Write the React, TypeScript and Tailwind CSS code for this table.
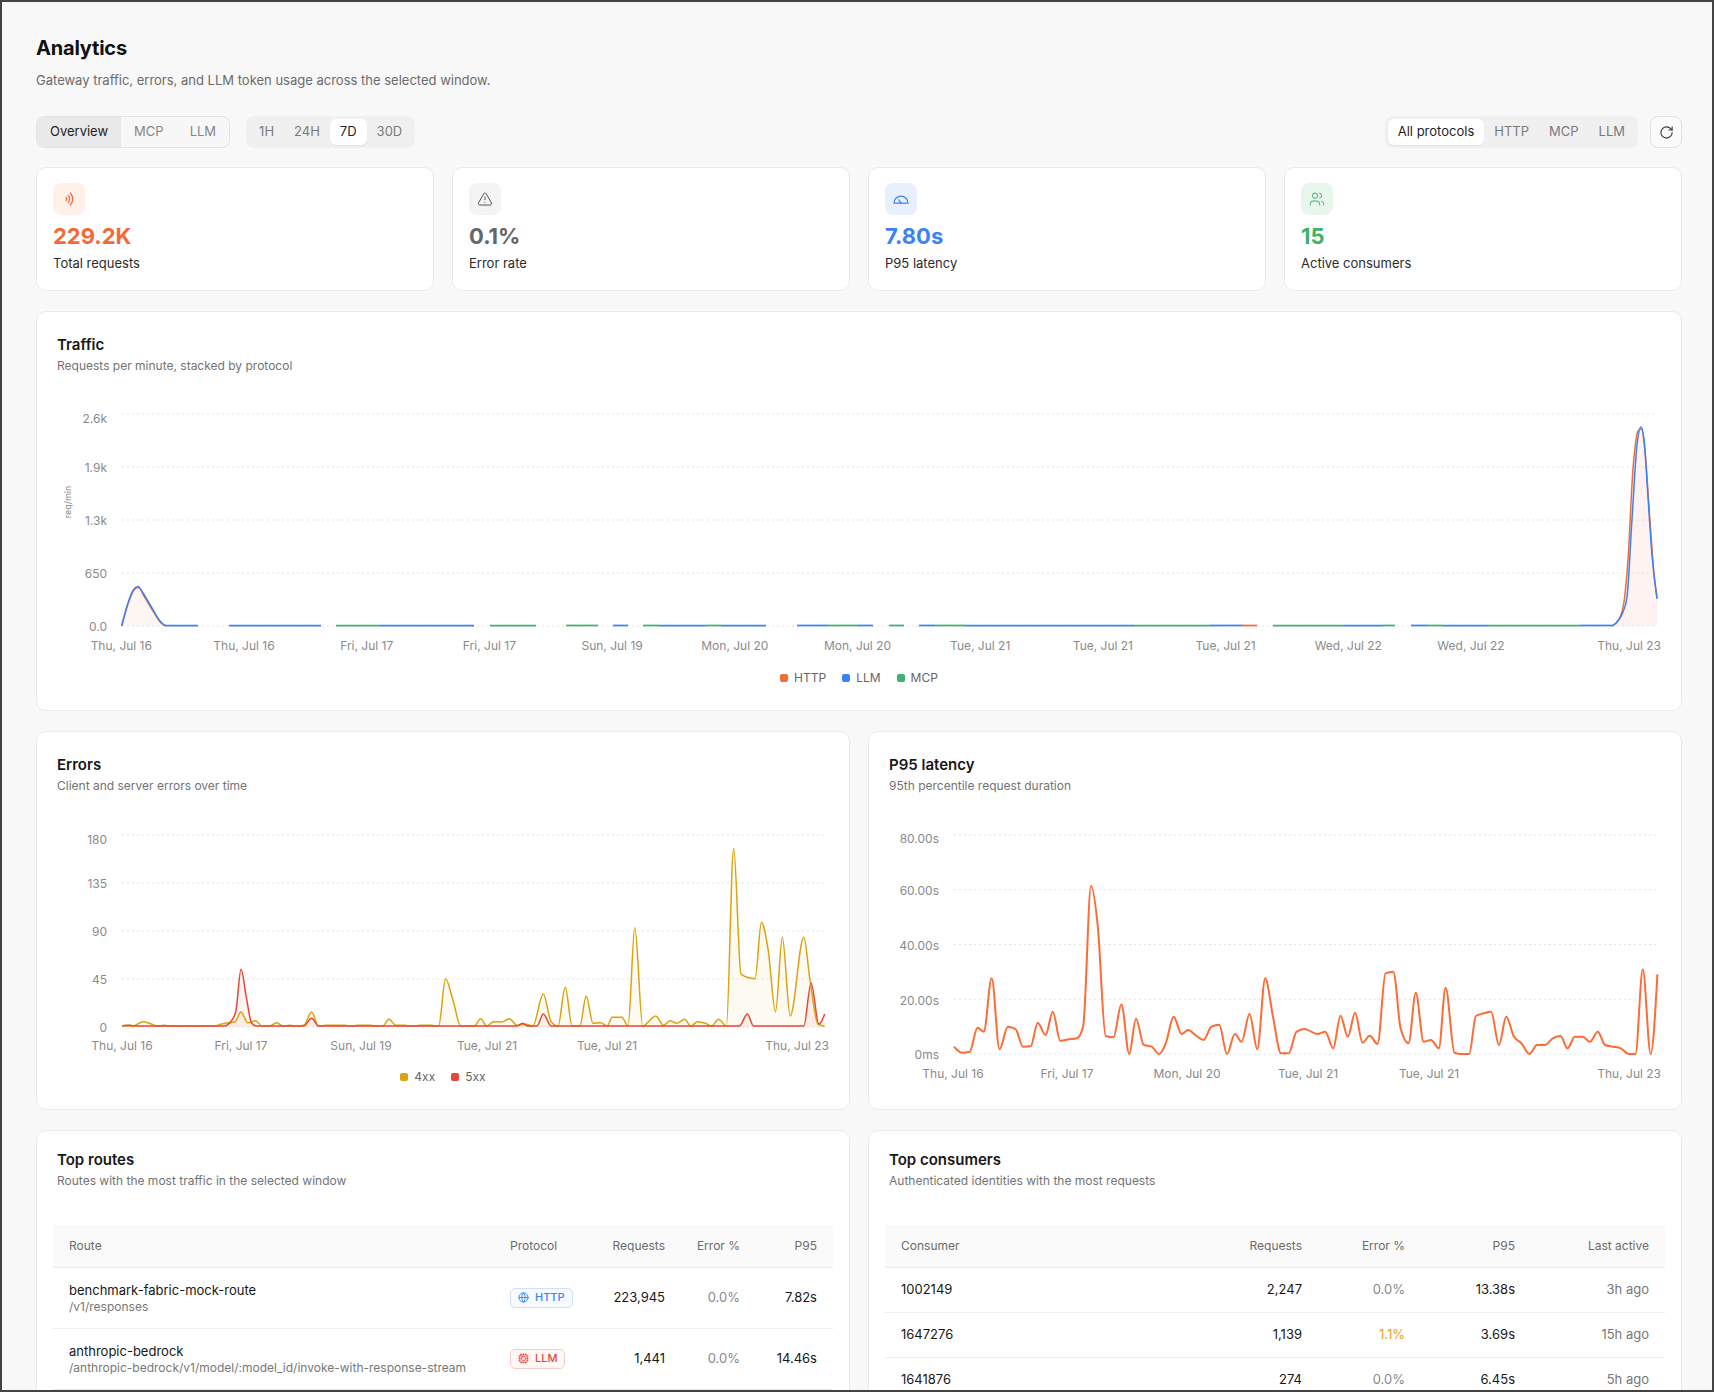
import React from "react";
import { TriangleAlert, Users, RotateCw, Globe, Cpu } from "lucide-react";

type Pt = [number, number];

function sgn(x: number) {
  return x < 0 ? -1 : 1;
}

function monotone(pts: Pt[]): string {
  const n = pts.length;
  if (n < 2) return "";
  if (n === 2) return `M${pts[0][0]},${pts[0][1]}L${pts[1][0]},${pts[1][1]}`;
  const h = (i: number) => pts[i + 1][0] - pts[i][0];
  const s = (i: number) => (pts[i + 1][1] - pts[i][1]) / (h(i) || 1e-9);
  const t: number[] = new Array(n).fill(0);
  for (let i = 1; i < n - 1; i++) {
    const h0 = h(i - 1);
    const h1 = h(i);
    const s0 = s(i - 1);
    const s1 = s(i);
    const p = (s0 * h1 + s1 * h0) / (h0 + h1);
    t[i] = (sgn(s0) + sgn(s1)) * Math.min(Math.abs(s0), Math.abs(s1), 0.5 * Math.abs(p)) || 0;
  }
  t[0] = (3 * s(0) - t[1]) / 2;
  t[n - 1] = (3 * s(n - 2) - t[n - 2]) / 2;
  let d = `M${pts[0][0].toFixed(1)},${pts[0][1].toFixed(1)}`;
  for (let i = 0; i < n - 1; i++) {
    const [x0, y0] = pts[i];
    const [x1, y1] = pts[i + 1];
    const dx = (x1 - x0) / 3;
    d += `C${(x0 + dx).toFixed(1)},${(y0 + t[i] * dx).toFixed(1)},${(x1 - dx).toFixed(1)},${(
      y1 -
      t[i + 1] * dx
    ).toFixed(1)},${x1.toFixed(1)},${y1.toFixed(1)}`;
  }
  return d;
}

function area(pts: Pt[], base: number) {
  const first = pts[0];
  const last = pts[pts.length - 1];
  return `${monotone(pts)}L${last[0]},${base}L${first[0]},${base}Z`;
}

function conv(list: number[][], ax: number, bx: number, by: number, base: number): Pt[] {
  return list.map(([x, y]) => [x * ax + bx, Math.min(y / 3 + by, base)] as Pt);
}

/* ---------------- Traffic ---------------- */
const TX = 57;
const TY = 373;
const tr = (list: number[][]): Pt[] => list.map(([x, y]) => [x - TX, Math.min(y - TY, 254)] as Pt);

const bumpBlue = tr([
  [121.7, 627],
  [128, 604],
  [134, 590],
  [138, 587.5],
  [143, 594],
  [152, 609],
  [160, 622],
  [165.5, 627],
]);
const bumpOrange = tr([
  [121.7, 627],
  [128, 605],
  [134, 591],
  [138.5, 588.5],
  [144, 597],
  [153, 612],
  [161, 624],
  [166.5, 627],
]);
const spikeBlue = tr([
  [1612, 627],
  [1618, 622],
  [1623, 613],
  [1627, 598],
  [1632, 520],
  [1637, 446],
  [1641, 428],
  [1644, 440],
  [1648, 498],
  [1652, 556],
  [1657, 600],
]);
const spikeOrange = tr([
  [1612, 627],
  [1619, 620],
  [1624, 603],
  [1628, 560],
  [1633, 470],
  [1638, 432],
  [1641.5, 430],
  [1645, 452],
  [1649.5, 515],
  [1654, 575],
  [1657, 598],
]);

const blueSegs = [
  [165, 198],
  [229, 321],
  [380, 474],
  [613, 628],
  [659, 706],
  [721, 766],
  [797, 828],
  [858, 873],
  [919, 935],
  [965, 1134],
  [1210, 1242],
  [1344, 1383],
  [1411, 1427],
  [1443, 1488],
  [1580, 1612],
];
const greenSegs = [
  [336, 380],
  [490, 536],
  [566, 598],
  [643, 659],
  [706, 721],
  [828, 858],
  [889, 904],
  [935, 965],
  [1134, 1210],
  [1273, 1344],
  [1383, 1395],
  [1427, 1443],
  [1488, 1580],
];
const orangeSegs = [[1242, 1257]];

const trafficXLabels = [
  "Thu, Jul 16",
  "Thu, Jul 16",
  "Fri, Jul 17",
  "Fri, Jul 17",
  "Sun, Jul 19",
  "Mon, Jul 20",
  "Mon, Jul 20",
  "Tue, Jul 21",
  "Tue, Jul 21",
  "Tue, Jul 21",
  "Wed, Jul 22",
  "Wed, Jul 22",
];

const BLUE = "#3b82f6";
const GREEN = "#3cb371";
const ORANGE = "#f26b3a";
const AMBER = "#dca20f";
const RED = "#e5483a";
const AXIS = "#8a8a8a";
const GRID = "#e4e4e4";

function TrafficChart() {
  const grids = [42, 95, 148, 201, 254];
  const ylabels: [string, number][] = [
    ["2.6k", 46],
    ["1.9k", 95],
    ["1.3k", 148],
    ["650", 201],
    ["0.0", 254],
  ];
  return (
    <svg width={1604} height={290} className="-mt-0.5 block">
      {grids.map((g) => (
        <line key={g} x1={65} x2={1600} y1={g} y2={g} stroke={GRID} strokeDasharray="2 3" />
      ))}
      {ylabels.map(([l, y]) => (
        <text key={l} x={50} y={y} textAnchor="end" dominantBaseline="central" fontSize={12} fill={AXIS}>
          {l}
        </text>
      ))}
      <text
        x={10}
        y={130}
        transform="rotate(-90 10 130)"
        textAnchor="middle"
        dominantBaseline="central"
        fontSize={9}
        fill={AXIS}
      >
        req/min
      </text>
      <path d={area(bumpOrange, 254)} fill={ORANGE} fillOpacity={0.06} />
      <path d={area(spikeOrange, 254)} fill={ORANGE} fillOpacity={0.08} />
      {greenSegs.map(([a, b]) => (
        <line key={"g" + a} x1={a - TX} x2={b - TX} y1={253.5} y2={253.5} stroke={GREEN} strokeWidth={1.75} />
      ))}
      {blueSegs.map(([a, b]) => (
        <line key={"b" + a} x1={a - TX} x2={b - TX} y1={253.5} y2={253.5} stroke={BLUE} strokeWidth={1.75} />
      ))}
      {orangeSegs.map(([a, b]) => (
        <line key={"o" + a} x1={a - TX} x2={b - TX} y1={253.5} y2={253.5} stroke={ORANGE} strokeWidth={1.75} />
      ))}
      <path d={monotone(bumpOrange)} fill="none" stroke={ORANGE} strokeWidth={1.5} />
      <path d={monotone(bumpBlue)} fill="none" stroke={BLUE} strokeWidth={1.5} />
      <path d={monotone(spikeOrange)} fill="none" stroke={ORANGE} strokeWidth={1.5} />
      <path d={monotone(spikeBlue)} fill="none" stroke={BLUE} strokeWidth={1.5} />
      {trafficXLabels.map((l, i) => (
        <text
          key={i}
          x={64.3 + 122.7 * i}
          y={273}
          textAnchor="middle"
          dominantBaseline="central"
          fontSize={12}
          fill={AXIS}
        >
          {l}
        </text>
      ))}
      <text x={1604} y={273} textAnchor="end" dominantBaseline="central" fontSize={12} fill={AXIS}>
        Thu, Jul 23
      </text>
    </svg>
  );
}

/* ---------------- Errors ---------------- */
const e4xx = [
  [165, 888], [185, 888], [205, 875], [220, 882], [232, 888], [245, 886], [258, 888], [340, 888],
  [355, 882], [368, 878], [380, 876], [392, 846], [405, 878], [420, 872], [432, 888], [447, 888],
  [460, 878], [472, 888], [485, 886], [500, 888], [512, 886], [527, 846], [540, 888], [555, 886],
  [590, 886], [602, 888], [615, 886], [640, 886], [652, 888], [663, 888], [675, 868], [688, 886],
  [705, 886], [720, 888], [735, 886], [755, 886], [770, 888], [783, 746], [798, 815], [812, 888],
  [838, 888], [850, 866], [862, 888], [875, 875], [890, 876], [905, 866], [920, 886], [935, 882],
  [950, 888], [970, 792], [985, 875], [998, 888], [1012, 772], [1025, 888], [1040, 888], [1052, 798],
  [1065, 880], [1080, 878], [1092, 888], [1102, 862], [1120, 862], [1132, 888], [1145, 593], [1160, 888],
  [1185, 858], [1200, 886], [1212, 872], [1225, 880], [1240, 868], [1252, 888], [1265, 875], [1280, 880],
  [1292, 888], [1305, 868], [1320, 888], [1334, 355], [1348, 732], [1360, 742], [1375, 746], [1387, 577],
  [1400, 660], [1414, 845], [1427, 622], [1442, 858], [1468, 622], [1480, 750], [1495, 882], [1508, 888],
];
const e5xx = [
  [165, 888], [172, 886], [180, 886], [190, 888], [360, 888], [372, 875], [382, 845], [392, 718],
  [402, 800], [412, 878], [422, 888], [512, 888], [527, 865], [540, 888], [920, 888], [930, 880],
  [940, 888], [958, 888], [970, 852], [985, 888], [1345, 888], [1360, 852], [1372, 888], [1468, 888],
  [1482, 760], [1497, 882], [1508, 852],
];

function ErrorsChart() {
  const base = 235;
  const p4 = conv(e4xx, 0.523, -21, -62, base);
  const p5 = conv(e5xx, 0.523, -21, -62, base);
  const grids = [43, 91, 139, 187, 235];
  const ylabels: [string, number][] = [
    ["180", 47],
    ["135", 91],
    ["90", 139],
    ["45", 187],
    ["0", 235],
  ];
  const xl: [string, number, "middle" | "end"][] = [
    ["Thu, Jul 16", 65, "middle"],
    ["Fri, Jul 17", 184, "middle"],
    ["Sun, Jul 19", 304, "middle"],
    ["Tue, Jul 21", 430, "middle"],
    ["Tue, Jul 21", 550, "middle"],
    ["Thu, Jul 23", 772, "end"],
  ];
  return (
    <svg width={772} height={271} className="-mt-0.5 block">
      {grids.map((g) => (
        <line key={g} x1={65} x2={768} y1={g} y2={g} stroke={GRID} strokeDasharray="2 3" />
      ))}
      {ylabels.map(([l, y]) => (
        <text key={l} x={50} y={y} textAnchor="end" dominantBaseline="central" fontSize={12} fill={AXIS}>
          {l}
        </text>
      ))}
      <path d={area(p4, base)} fill={AMBER} fillOpacity={0.06} />
      <path d={area(p5, base)} fill={RED} fillOpacity={0.06} />
      <path d={monotone(p4)} fill="none" stroke={AMBER} strokeWidth={1.5} />
      <path d={monotone(p5)} fill="none" stroke={RED} strokeWidth={1.5} />
      {xl.map(([l, x, a], i) => (
        <text key={i} x={x} y={253} textAnchor={a} dominantBaseline="central" fontSize={12} fill={AXIS}>
          {l}
        </text>
      ))}
    </svg>
  );
}

/* ---------------- Latency ---------------- */
const lat = [
  [165, 950], [180, 968], [195, 965], [210, 893], [222, 905], [237, 745], [252, 958], [268, 890],
  [283, 898], [297, 950], [312, 948], [325, 878], [340, 915], [354, 845], [368, 932], [385, 928],
  [400, 925], [412, 888], [427, 468], [440, 590], [455, 918], [470, 922], [485, 823], [500, 975],
  [513, 866], [528, 945], [543, 950], [557, 975], [570, 940], [585, 860], [600, 912], [613, 900],
  [628, 917], [642, 930], [657, 890], [672, 884], [687, 973], [702, 912], [715, 935], [730, 852],
  [745, 958], [760, 745], [775, 860], [790, 970], [805, 970], [820, 905], [835, 897], [860, 912],
  [875, 905], [890, 955], [904, 857], [918, 920], [932, 848], [946, 938], [960, 917], [975, 942],
  [990, 730], [1005, 725], [1019, 895], [1034, 940], [1048, 788], [1063, 935], [1077, 930], [1092, 955],
  [1105, 773], [1122, 968], [1135, 975], [1150, 972], [1163, 858], [1178, 850], [1192, 845], [1207, 945],
  [1221, 860], [1235, 918], [1250, 940], [1265, 973], [1280, 945], [1295, 945], [1310, 925], [1325, 918],
  [1338, 955], [1352, 920], [1367, 920], [1381, 935], [1396, 905], [1410, 945], [1425, 950], [1440, 955],
  [1455, 975], [1468, 975], [1482, 718], [1497, 975], [1510, 733],
];

function LatencyChart() {
  const base = 262;
  const p = conv(lat, 0.523, -21.3, -62, base);
  const grids = [43, 97.75, 152.5, 207.25, 262];
  const ylabels: [string, number][] = [
    ["80.00s", 46],
    ["60.00s", 98],
    ["40.00s", 153],
    ["20.00s", 208],
    ["0ms", 262],
  ];
  const xl: [string, number, "middle" | "end"][] = [
    ["Thu, Jul 16", 64, "middle"],
    ["Fri, Jul 17", 178, "middle"],
    ["Mon, Jul 20", 298, "middle"],
    ["Tue, Jul 21", 419, "middle"],
    ["Tue, Jul 21", 540, "middle"],
    ["Thu, Jul 23", 772, "end"],
  ];
  return (
    <svg width={772} height={295} className="-mt-0.5 block">
      {grids.map((g) => (
        <line key={g} x1={65} x2={768} y1={g} y2={g} stroke={GRID} strokeDasharray="2 3" />
      ))}
      {ylabels.map(([l, y]) => (
        <text key={l} x={50} y={y} textAnchor="end" dominantBaseline="central" fontSize={12} fill={AXIS}>
          {l}
        </text>
      ))}
      <path d={monotone(p)} fill="none" stroke="#ff6a35" strokeWidth={2} strokeLinejoin="round" />
      {xl.map(([l, x, a], i) => (
        <text key={i} x={x} y={281} textAnchor={a} dominantBaseline="central" fontSize={12} fill={AXIS}>
          {l}
        </text>
      ))}
    </svg>
  );
}

/* ---------------- Icons ---------------- */
function WavesIcon() {
  return (
    <svg width={16} height={16} viewBox="0 0 24 24" fill="none" stroke={ORANGE} strokeWidth={2} strokeLinecap="round">
      <path d="M7.5 9.6a3.4 3.4 0 0 1 0 4.8" />
      <path d="M10.8 6.6a8 8 0 0 1 0 10.8" />
      <path d="M14.2 3.4a12.6 12.6 0 0 1 0 17.2" />
    </svg>
  );
}

function GaugeIcon() {
  return (
    <svg width={16} height={16} viewBox="0 0 16 16" fill="none" stroke="#3b82f6" strokeWidth={1.2} strokeLinecap="round" strokeLinejoin="round">
      <path d="M1 12.2A7 7 0 0 1 15 12.2Z" />
      <path d="M8 12.2 5.8 8.8" />
    </svg>
  );
}

/* ---------------- Pieces ---------------- */
function StatCard(props: {
  icon: React.ReactNode;
  iconBg: string;
  value: string;
  valueColor: string;
  label: string;
}) {
  return (
    <div className="rounded-[10px] border border-[#ebebeb] bg-white px-4 pt-[15px] pb-[17px]">
      <div className={`flex h-8 w-8 items-center justify-center rounded-lg ${props.iconBg}`}>{props.icon}</div>
      <div className={`mt-2 text-[22px] leading-[26px] font-bold ${props.valueColor}`}>{props.value}</div>
      <div className="mt-1 text-[13px] leading-5 text-[#2b2b2b]">{props.label}</div>
    </div>
  );
}

function CardHeader({ title, sub }: { title: string; sub: string }) {
  return (
    <div>
      <div className="text-[15px] leading-6 font-semibold text-[#171717]">{title}</div>
      <div className="mt-px text-[12px] leading-4 text-[#737373]">{sub}</div>
    </div>
  );
}

function LegendItem({ color, label }: { color: string; label: string }) {
  return (
    <div className="flex items-center gap-[6px]">
      <span className={`h-2 w-2 rounded-[2px] ${color}`} />
      <span>{label}</span>
    </div>
  );
}

const routes = [
  {
    name: "benchmark-fabric-mock-route",
    path: "/v1/responses",
    proto: "HTTP",
    req: "223,945",
    err: "0.0%",
    p95: "7.82s",
  },
  {
    name: "anthropic-bedrock",
    path: "/anthropic-bedrock/v1/model/:model_id/invoke-with-response-stream",
    proto: "LLM",
    req: "1,441",
    err: "0.0%",
    p95: "14.46s",
  },
];

const consumers = [
  { id: "1002149", req: "2,247", err: "0.0%", warn: false, p95: "13.38s", last: "3h ago" },
  { id: "1647276", req: "1,139", err: "1.1%", warn: true, p95: "3.69s", last: "15h ago" },
  { id: "1641876", req: "274", err: "0.0%", warn: false, p95: "6.45s", last: "5h ago" },
];

function ProtoBadge({ proto }: { proto: string }) {
  if (proto === "HTTP") {
    return (
      <span className="inline-flex h-5 items-center gap-[6px] rounded-[5px] border border-[#cfe0fb] bg-[#f7faff] px-[7px] text-[11px] font-medium text-[#3b82f6]">
        <Globe size={11} strokeWidth={2} />
        HTTP
      </span>
    );
  }
  return (
    <span className="inline-flex h-5 items-center gap-[6px] rounded-[5px] border border-[#f8cdc6] bg-[#fff8f7] px-[7px] text-[11px] font-medium text-[#e5483a]">
      <Cpu size={11} strokeWidth={2} />
      LLM
    </span>
  );
}

const routeCols = "grid-cols-[1fr_94px_93px_75px_77px]";
const consCols = "grid-cols-[1fr_120px_103px_110px_134px]";

export default function App() {
  return (
    <div className="h-[1392px] w-full overflow-hidden border-2 border-[#434343] bg-[#f8f8f8] pt-[32px] pr-[30px] pl-[34px] font-[Inter,sans-serif] text-[#171717]">
      {/* Header */}
      <h1 className="text-xl leading-7 font-bold tracking-[-0.01em] text-[#111]">Analytics</h1>
      <p className="mt-2 text-[13px] leading-5 text-[#6b6b6b]">
        Gateway traffic, errors, and LLM token usage across the selected window.
      </p>

      {/* Controls */}
      <div className="mt-[26px] flex h-8 items-center justify-between">
        <div className="flex items-center gap-4">
          <div className="flex h-8 items-stretch overflow-hidden rounded-lg border border-[#e3e3e3] bg-[#f7f7f7] text-[13px]">
            <div className="flex items-center bg-[#e9e9e9] px-[13px] text-[#1f1f1f]">Overview</div>
            <div className="flex items-center px-[13px] text-[#858585]">MCP</div>
            <div className="flex items-center px-[13px] text-[#858585]">LLM</div>
          </div>
          <div className="flex h-8 items-center rounded-lg bg-[#f0f0f0] p-[3px] text-[13px]">
            <div className="flex h-[26px] items-center px-2.5 text-[#7a7a7a]">1H</div>
            <div className="flex h-[26px] items-center px-2.5 text-[#7a7a7a]">24H</div>
            <div className="flex h-[26px] items-center rounded-md bg-white px-2.5 text-[#1f1f1f] shadow-[0_1px_2px_rgba(0,0,0,0.06)]">
              7D
            </div>
            <div className="flex h-[26px] items-center px-2.5 text-[#7a7a7a]">30D</div>
          </div>
        </div>
        <div className="flex items-center gap-3">
          <div className="flex h-8 items-center rounded-lg bg-[#f0f0f0] p-[3px] text-[13px]">
            <div className="flex h-[26px] items-center rounded-md bg-white px-2.5 text-[#1f1f1f] shadow-[0_1px_2px_rgba(0,0,0,0.06)]">
              All protocols
            </div>
            <div className="flex h-[26px] items-center px-2.5 text-[#7a7a7a]">HTTP</div>
            <div className="flex h-[26px] items-center px-2.5 text-[#7a7a7a]">MCP</div>
            <div className="flex h-[26px] items-center px-2.5 text-[#7a7a7a]">LLM</div>
          </div>
          <div className="flex h-8 w-8 items-center justify-center rounded-lg border border-[#e3e3e3] bg-[#fbfbfb] text-[#3a3a3a]">
            <RotateCw size={15} strokeWidth={1.75} />
          </div>
        </div>
      </div>

      {/* Stat cards */}
      <div className="mt-[19px] grid grid-cols-4 gap-[18px]">
        <StatCard
          icon={<WavesIcon />}
          iconBg="bg-[#fff0ea]"
          value="229.2K"
          valueColor="text-[#f4693a]"
          label="Total requests"
        />
        <StatCard
          icon={<TriangleAlert size={16} strokeWidth={1.5} className="text-[#555]" />}
          iconBg="bg-[#f4f4f4]"
          value="0.1%"
          valueColor="text-[#63666a]"
          label="Error rate"
        />
        <StatCard
          icon={<GaugeIcon />}
          iconBg="bg-[#e9f0fd]"
          value="7.80s"
          valueColor="text-[#3b82f6]"
          label="P95 latency"
        />
        <StatCard
          icon={<Users size={16} strokeWidth={1.5} className="text-[#3cb371]" />}
          iconBg="bg-[#e9f6ee]"
          value="15"
          valueColor="text-[#3cb36a]"
          label="Active consumers"
        />
      </div>

      {/* Traffic */}
      <div className="mt-[20px] rounded-[10px] border border-[#ebebeb] bg-white px-5 pt-[21px] pb-[24px]">
        <CardHeader title="Traffic" sub="Requests per minute, stacked by protocol" />
        <TrafficChart />
        <div className="mt-2 flex h-4 items-center justify-center gap-4 text-[12px] text-[#666]">
          <LegendItem color="bg-[#f26b3a]" label="HTTP" />
          <LegendItem color="bg-[#3b82f6]" label="LLM" />
          <LegendItem color="bg-[#3cb371]" label="MCP" />
        </div>
      </div>

      {/* Errors / latency */}
      <div className="mt-[20px] grid grid-cols-2 gap-[18px]">
        <div className="rounded-[10px] border border-[#ebebeb] bg-white px-5 pt-[21px] pb-[22px]">
          <CardHeader title="Errors" sub="Client and server errors over time" />
          <ErrorsChart />
          <div className="mt-1.5 flex h-4 items-center justify-center gap-4 text-[12px] text-[#666]">
            <LegendItem color="bg-[#dca20f]" label="4xx" />
            <LegendItem color="bg-[#e5483a]" label="5xx" />
          </div>
        </div>
        <div className="rounded-[10px] border border-[#ebebeb] bg-white px-5 pt-[21px] pb-[22px]">
          <CardHeader title="P95 latency" sub="95th percentile request duration" />
          <LatencyChart />
        </div>
      </div>

      {/* Tables */}
      <div className="mt-[20px] grid grid-cols-2 gap-[18px]">
        <div className="rounded-[10px] border border-[#ebebeb] bg-white px-5 pt-[17px] pb-4">
          <CardHeader title="Top routes" sub="Routes with the most traffic in the selected window" />
          <div className="-mx-1 mt-[36px]">
            <div
              className={`grid h-[43px] ${routeCols} items-center border-b border-[#ececec] bg-[#fafafa] text-[12px] whitespace-nowrap text-[#6b6b6b]`}
            >
              <div className="px-4">Route</div>
              <div className="px-4">Protocol</div>
              <div className="pr-4 text-right">Requests</div>
              <div className="pr-4 text-right">Error %</div>
              <div className="pr-4 text-right">P95</div>
            </div>
            {routes.map((r) => (
              <div
                key={r.name}
                className={`grid h-[61px] ${routeCols} items-center border-b border-[#ececec] text-[13px] whitespace-nowrap`}
              >
                <div className="min-w-0 px-4">
                  <div className="truncate leading-[18px] text-[#171717]">{r.name}</div>
                  <div className="truncate text-[12px] leading-4 text-[#777]">{r.path}</div>
                </div>
                <div className="px-4">
                  <ProtoBadge proto={r.proto} />
                </div>
                <div className="pr-4 text-right text-[#171717]">{r.req}</div>
                <div className="pr-4 text-right text-[#8a8a8a]">{r.err}</div>
                <div className="pr-4 text-right text-[#171717]">{r.p95}</div>
              </div>
            ))}
          </div>
        </div>
        <div className="rounded-[10px] border border-[#ebebeb] bg-white px-5 pt-[17px] pb-4">
          <CardHeader title="Top consumers" sub="Authenticated identities with the most requests" />
          <div className="-mx-1 mt-[36px]">
            <div
              className={`grid h-[43px] ${consCols} items-center border-b border-[#ececec] bg-[#fafafa] text-[12px] whitespace-nowrap text-[#6b6b6b]`}
            >
              <div className="px-4">Consumer</div>
              <div className="pr-4 text-right">Requests</div>
              <div className="pr-4 text-right">Error %</div>
              <div className="pr-4 text-right">P95</div>
              <div className="pr-4 text-right">Last active</div>
            </div>
            {consumers.map((c) => (
              <div
                key={c.id}
                className={`grid h-[45px] ${consCols} items-center border-b border-[#ececec] text-[13px] whitespace-nowrap`}
              >
                <div className="px-4 text-[#171717]">{c.id}</div>
                <div className="pr-4 text-right text-[#171717]">{c.req}</div>
                <div className={`pr-4 text-right ${c.warn ? "text-[#e6a323]" : "text-[#8a8a8a]"}`}>{c.err}</div>
                <div className="pr-4 text-right text-[#171717]">{c.p95}</div>
                <div className="pr-4 text-right text-[#777]">{c.last}</div>
              </div>
            ))}
          </div>
        </div>
      </div>
    </div>
  );
}
